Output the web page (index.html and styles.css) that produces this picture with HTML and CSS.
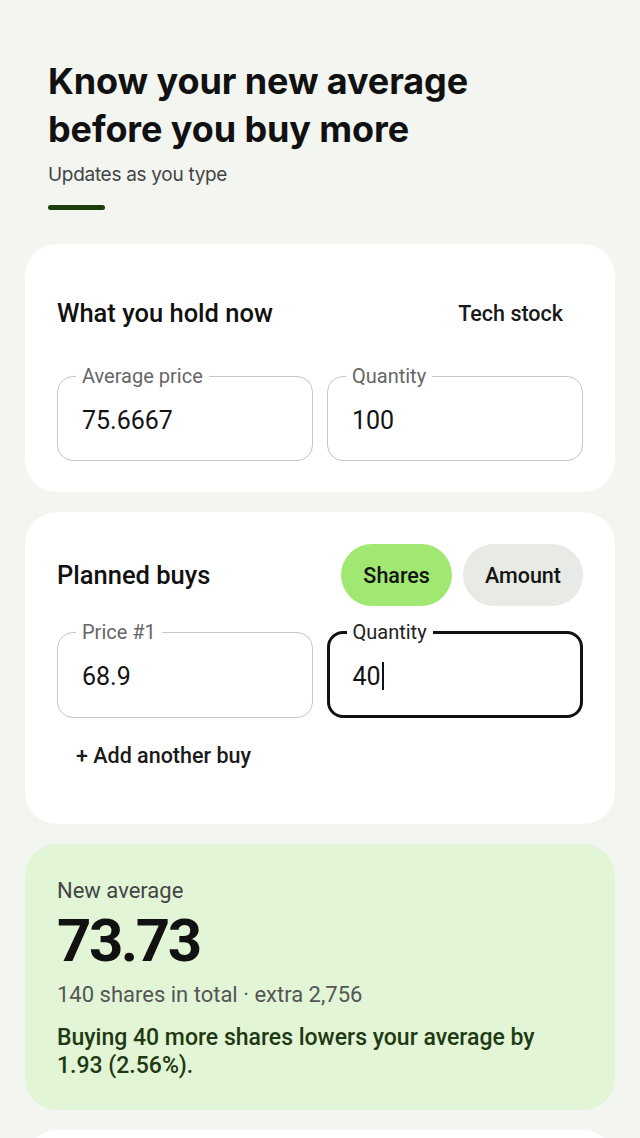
FILE: index.html
```html
<!DOCTYPE html>
<html lang="en">
<head>
    <meta charset="UTF-8">
    <meta name="viewport" content="width=device-width, initial-scale=1.0">
    <title>Average down calculator</title>
    <link rel="stylesheet" href="styles.css">
</head>
<body>
    <div class="page">
        <header class="intro">
            <h1>Know your new average before you buy more</h1>
            <p class="subtitle">Updates as you type</p>
            <div class="accent-bar"></div>
        </header>

        <section class="card holding">
            <div class="card-head">
                <h2>What you hold now</h2>
                <button class="text-btn">Tech stock</button>
            </div>
            <div class="fields">
                <fieldset class="field">
                    <legend>Average price</legend>
                    <div class="value">75.6667</div>
                </fieldset>
                <fieldset class="field">
                    <legend>Quantity</legend>
                    <div class="value">100</div>
                </fieldset>
            </div>
        </section>

        <section class="card planned">
            <div class="card-head">
                <h2>Planned buys</h2>
                <div class="chips">
                    <button class="chip active">Shares</button>
                    <button class="chip">Amount</button>
                </div>
            </div>
            <div class="fields">
                <fieldset class="field">
                    <legend>Price #1</legend>
                    <div class="value">68.9</div>
                </fieldset>
                <fieldset class="field focused">
                    <legend>Quantity</legend>
                    <div class="value">40<span class="caret"></span></div>
                </fieldset>
            </div>
            <button class="text-btn add-btn">+ Add another buy</button>
        </section>

        <section class="card result">
            <div class="result-label">New average</div>
            <div class="result-value">73.73</div>
            <div class="result-meta">140 shares in total · extra 2,756</div>
            <p class="result-note">Buying 40 more shares lowers your average by 1.93 (2.56%).</p>
        </section>

        <section class="card extra"></section>
    </div>
</body>
</html>
```

FILE: styles.css
```css
body {
    margin: 0;
    background-color: #f3f5f0;
    color: #141414;
    font-family: Roboto, "Noto Sans", sans-serif;
}
.page {
    padding: 0 25px 40px;
}
.intro {
    padding: 57px 23px 0;
}
.intro h1 {
    max-width: 450px;
    margin: 0;
    font-family: Inter, Roboto, sans-serif;
    font-size: 36px;
    line-height: 48px;
    font-weight: 700;
    letter-spacing: -0.1px;
    color: #111;
}
.subtitle {
    margin: 8px 0 0;
    font-family: Inter, Roboto, sans-serif;
    font-size: 19px;
    line-height: 28px;
    color: #444;
    letter-spacing: -0.3px;
}
.accent-bar {
    width: 57px;
    height: 5px;
    margin-top: 16px;
    border-radius: 3px;
    background: #1c3d0c;
}
.card {
    background: #fff;
    border-radius: 32px;
    padding: 32px;
    margin-top: 20px;
}
.holding {
    margin-top: 34px;
    padding-top: 40px;
    padding-bottom: 31px;
}
.card-head {
    display: flex;
    align-items: center;
    justify-content: space-between;
    min-height: 58px;
}
.card-head h2 {
    margin: 0;
    font-size: 25.5px;
    line-height: 32px;
    font-weight: 500;
    color: #111;
}
.text-btn {
    border: none;
    background: none;
    font-family: inherit;
    font-size: 21.5px;
    font-weight: 500;
    color: #1a1a1a;
    padding: 0 20px;
    height: 48px;
}
.fields {
    display: grid;
    grid-template-columns: 1fr 1fr;
    gap: 14px;
    margin-top: 24px;
}
.field {
    margin: 0;
    min-width: 0;
    border: 1.5px solid #c6c8c1;
    border-radius: 16px;
    padding: 0 24px 7px;
}
.field legend {
    margin-left: -6px;
    padding: 0 6px;
    font-size: 20px;
    line-height: 20px;
    color: #666;
}
.value {
    height: 64px;
    padding-top: 3px;
    line-height: 64px;
    font-size: 25px;
    color: #141414;
}
.field.focused {
    border: 3px solid #111;
    padding: 0 22.5px 5.5px;
}
.field.focused legend {
    color: #222;
}
.caret {
    display: inline-block;
    width: 2.5px;
    height: 28px;
    margin-left: 1px;
    vertical-align: -5px;
    background: #111;
}
.planned {
    padding-top: 32px;
    padding-bottom: 40px;
}
.planned .card-head {
    min-height: 62px;
}
.planned .fields {
    margin-top: 16px;
}
.chips {
    display: flex;
    gap: 11px;
}
.chip {
    border: none;
    height: 62px;
    padding: 0 22px;
    border-radius: 31px;
    font-family: inherit;
    font-size: 21.5px;
    font-weight: 500;
    color: #141414;
    background: #e8eae6;
}
.chip.active {
    background: #a1e873;
}
.add-btn {
    display: block;
    height: 56px;
    margin: 10px 0 0;
    padding: 0 19px;
}
.result {
    background: #e2f5d6;
    padding-top: 33px;
    padding-bottom: 30px;
}
.result-label {
    font-size: 22px;
    line-height: 28px;
    color: #444;
}
.result-value {
    margin-top: 4px;
    font-size: 60px;
    line-height: 64px;
    font-weight: 700;
    letter-spacing: -2.5px;
    color: #111;
}
.result-meta {
    margin-top: 8px;
    font-size: 22px;
    line-height: 28px;
    color: #555;
}
.result-note {
    margin: 15px 0 0;
    font-size: 23px;
    line-height: 28px;
    font-weight: 500;
    color: #1e3a12;
}
.extra {
    min-height: 240px;
}
```
